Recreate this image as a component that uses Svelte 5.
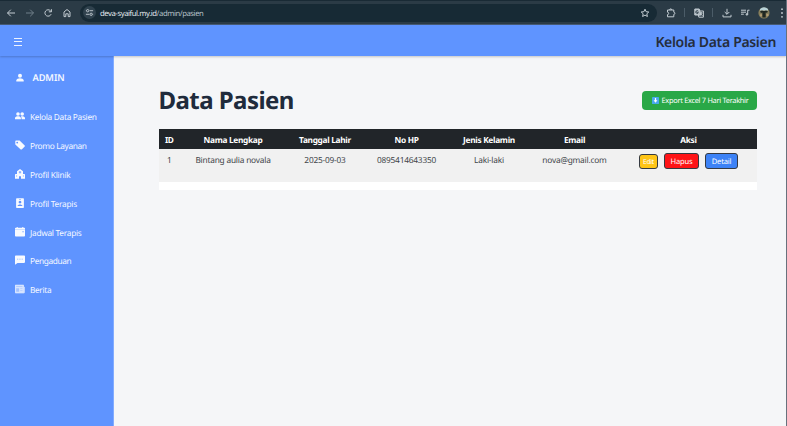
<script>
  const menu = [
    { label: 'Kelola Data Pasien', icon: 'people', ls: -0.3 },
    { label: 'Promo Layanan', icon: 'tag', ls: -0.34 },
    { label: 'Profil Klinik', icon: 'hospital', ls: -0.25 },
    { label: 'Profil Terapis', icon: 'badge', ls: -0.25 },
    { label: 'Jadwal Terapis', icon: 'calendar', ls: -0.27 },
    { label: 'Pengaduan', icon: 'chat', ls: -0.38 },
    { label: 'Berita', icon: 'news', ls: -0.35 }
  ];
  const columns = ['ID', 'Nama Lengkap', 'Tanggal Lahir', 'No HP', 'Jenis Kelamin', 'Email', 'Aksi'];
  const row = ['1', 'Bintang aulia novala', '2025-09-03', '0895414643350', 'Laki-laki', 'nova@gmail.com'];
</script>

<div class="screen">
  <div class="browser">
    <nav class="navs">
      <svg viewBox="0 0 10 10"><path d="M9 5H1.5M4.8 1.7 1.5 5l3.3 3.3" /></svg>
      <svg viewBox="0 0 10 10" class="dim"><path d="M1 5h7.5M5.2 1.7 8.5 5 5.2 8.3" /></svg>
      <svg viewBox="0 0 10 10"><path d="M8.1 6.2A3.2 3.2 0 1 1 7.4 2.7L8.3 3.6M8.4 1.2v2.6H5.8" /></svg>
      <svg viewBox="0 0 10 10"><path d="M2 8.6V4L5 1.5 8 4v4.6H6.2V5.8H3.8v2.8z" /></svg>
    </nav>
    <div class="address">
      <span class="site"><svg viewBox="0 0 10 10"><path d="M1 3h.6M5.2 3H9M1 7h3.8M8.4 7H9" /><circle cx="3" cy="3" r="1.3" /><circle cx="6.8" cy="7" r="1.3" /></svg></span>
      <span class="url">deva-syaiful.my.id<i>/admin/pasien</i></span>
      <svg class="star" viewBox="0 0 10 10"><path d="m5 1.2 1.1 2.5 2.7.3-2 1.8.6 2.7L5 7.1 2.6 8.5l.6-2.7-2-1.8 2.7-.3z" /></svg>
    </div>
    <div class="tools">
      <svg viewBox="0 0 10 10"><path d="M1.5 2h6.3v2.2a1.1 1.1 0 0 1 0 2.2v2.4H1.5V6.6a1.2 1.2 0 0 0 0-2.4zM3.6 2a1.1 1.1 0 0 1 2.2 0" /></svg>
      <b></b>
      <svg viewBox="0 0 10 10"><path class="fill" d="M.8 1h4.4l1.7 6H.8z" /><path d="M5.6 3h3.8v6.2H4.8L4.4 7M6 5h2.6M7.3 4.2V5c-.1 1.2-.8 2-1.5 2.5M6.4 5.5l2 2.3" /><path class="ink" d="M4.2 3.3a1.3 1.3 0 1 0 .1 1.3H3.2" /></svg>
      <b></b>
      <svg viewBox="0 0 10 10"><path d="M5 .8v5.3M2.7 4 5 6.3 7.3 4M1 6.8v2.1h8V6.8" /></svg>
      <svg viewBox="0 0 10 10" class="music"><path d="M1 2.2h5M1 4.2h5M1 6.2h2.8M7.7 6.3V2.2h1.8" /><circle class="fill" cx="6.9" cy="6.4" r=".8" /></svg>
      <svg class="avatar" viewBox="0 0 12 12"><circle cx="6" cy="6" r="5.6" fill="#877f5c" /><path d="M2 2a5.6 5.6 0 0 1 8 0v1.5H2z" fill="#b8d2d7" /><path d="M2 4.6 4 3.6 5 4h2l1-.4 2 1L9 5.8 7.7 5.4v5.2H4.4V5.5L3 6z" fill="#202721" /><path d="M2 7.3h2v2H2zM8.400 7h2v2h-2z" fill="#b69c72" /></svg>
      <svg class="dots" viewBox="0 0 4 12"><circle cx="2" cy="2.2" r=".9" /><circle cx="2" cy="6" r=".9" /><circle cx="2" cy="9.8" r=".9" /></svg>
    </div>
  </div>

  <header>
    <svg class="burger" viewBox="0 0 8 8"><path d="M0 .5h8M0 3.5h8M0 7.5h8" /></svg>
    <span class="title">Kelola Data Pasien</span>
  </header>

  <div class="body">
    <aside>
      <div class="admin">
        <svg viewBox="0 0 10 10"><circle cx="5" cy="2.8" r="2" /><path d="M1.3 8.5V7.5C1.3 6 3.5 5.3 5 5.3s3.7.7 3.7 2.2v1z" /></svg>
        <span>ADMIN</span>
      </div>
      {#each menu as item}
        <div class="item">
          <svg viewBox="0 0 10 10">
            {#if item.icon === 'people'}
              <circle cx="3" cy="3" r="1.8" /><circle cx="7.2" cy="3" r="1.8" /><path d="M0 8.3V7.1c0-1.3 1.6-1.8 3-1.8s2.9.5 2.9 1.8v1.2zM6.6 8.3V7c0-.7-.3-1.2-.8-1.6C7.5 5 10 5.6 10 7.1v1.2z" />
            {:else if item.icon === 'tag'}
              <path fill-rule="evenodd" d="M.3 1.3Q.3.6 1 .6h3.6L9.7 5.4q.4.5 0 1L6.7 9.4q-.5.4-1 0L.3 4.5zM2.2 1.7a.8.8 0 1 0 .01 0z" />
            {:else if item.icon === 'hospital'}
              <path fill-rule="evenodd" d="M0 9.7V5.6Q0 5 .6 5H2V2.2L5 0l3 2.2V5h1.4q.6 0 .6.6v4.1H6V7.3H4v2.4zM4.6 2v.8h-.8v.8h.8v.8h.8v-.8h.8v-.8h-.8V2zM1.3 6.4v1h.8v-1zM7.900 6.400v1h.8v-1z" />
            {:else if item.icon === 'badge'}
              <path fill-rule="evenodd" d="M1.8.2h6.4q.7 0 .7.7v8.3q0 .7-.7.7H1.8q-.7 0-.7-.7V.9q0-.7.7-.7zM4 .9v.6h2V.9zM5 2.7a1.4 1.4 0 1 0 .01 0zM2.6 7.9h4.8C7.4 5.9 2.6 5.9 2.6 7.9z" />
            {:else if item.icon === 'calendar'}
              <path fill-rule="evenodd" d="M0 1.4Q0 .7.7.7h1V.1h1v.6h4.6V.1h1v.6h1q.7 0 .7.7v.8H0zM0 2.5h10v6.3q0 .8-.8.8H.8Q0 9.6 0 8.8zM7.5 4.3v1h1.1v-1z" />
            {:else if item.icon === 'chat'}
              <path fill-rule="evenodd" d="M0 1.2Q0 .4.8.4h8.4q.8 0 .8.8v5.9q0 .8-.8.8H2.5L0 9.8zM2.3 3.7v.9h.9v-.9zM4.5 3.7v.9h.9v-.9zM6.7 3.7v.9h.9v-.9z" />
            {:else}
              <path opacity=".6" fill-rule="evenodd" d="M0 1.5Q0 .8.7.8h7.5q.7 0 .7.7v1.2h.5q.6 0 .6.6v5q0 1-1 1H1Q0 9.3 0 8.3zM1.2 2.3v.7h6.3v-.7zM1.2 4.2v3.5h2.9V4.2zM5.2 4.2v.6h2.3v-.6zM5.2 6v.6h2.3V6z" />
              <path opacity=".45" d="M0 .8h8.9v8.5H0z" />
            {/if}
          </svg>
          <span style="letter-spacing:{item.ls}px">{item.label}</span>
        </div>
      {/each}
    </aside>

    <main>
      <div class="heading">
        <h1>Data Pasien</h1>
        <button class="export">
          <svg viewBox="0 0 8 8"><rect width="8" height="8" rx="1" fill="#48a9ed" /><path d="M3.3 1.2h1.4v2.6h1.5L4 6.6 1.8 3.8h1.5z" fill="#fff" /></svg>
          <span>Export Excel 7 Hari Terakhir</span>
        </button>
      </div>
      <div class="card">
        <table>
          <colgroup><col class="c1" /><col class="c2" /><col class="c3" /><col class="c4" /><col class="c5" /><col class="c6" /><col class="c7" /></colgroup>
          <thead><tr>{#each columns as c}<th>{c}</th>{/each}</tr></thead>
          <tbody>
            <tr>
              {#each row as cell}<td>{cell}</td>{/each}
              <td class="last"><div class="actions"><button class="edit">Edit</button><button class="delete">Hapus</button><button class="detail">Detail</button></div></td>
            </tr>
          </tbody>
        </table>
      </div>
    </main>
  </div>
</div>

<style>
  :global(body) { margin: 0; overflow: hidden; }
  * { box-sizing: border-box; }
  .screen { width: 787px; height: 426px; display: flex; flex-direction: column; background: #f5f6f8; font-family: "Noto Sans", "Open Sans", sans-serif; text-rendering: geometricPrecision; overflow: hidden; border-right: 1px solid #68717d; }
  svg { display: block; flex: none; }
  button { font-family: inherit; text-rendering: inherit; margin: 0; padding: 2px 0 0; display: flex; align-items: center; justify-content: center; white-space: nowrap; }
  .browser { flex: none; width: 787px; height: 25px; background: #2b3b46; border-top: 1px solid #192a35; border-bottom: 1px solid #465b75; display: flex; align-items: center; padding-left: 6px; }
  .browser svg { width: 10px; height: 10px; fill: none; stroke: #c3ccd2; stroke-width: 1; }
  .navs { display: flex; gap: 8.7px; width: 74px; }
  .navs .dim { stroke: #71808a; }
  .address { width: 577px; height: 18px; border-radius: 9px; background: #172a35; display: flex; align-items: center; padding: 0 7px 0 3px; }
  .site { width: 13px; height: 13px; border-radius: 50%; background: #30424e; display: grid; place-items: center; }
  .site svg { width: 9px; height: 9px; }
  .url { font-size: 7.7px; color: #e2e8ec; margin-left: 4px; flex: 1; letter-spacing: -0.44px; padding-top: 2px; }
  .url i { font-style: normal; color: #b5c0c7; }
  .tools { display: flex; align-items: center; margin-left: 9px; }
  .tools b { width: 1px; height: 9px; background: #4b5c68; margin: 0 9px 0 8px; }
  .tools .fill { fill: #aeb9c0; }
  .tools .ink { stroke: #2b3b46; }
  .tools .music { margin-left: 8px; }
  .tools .avatar { width: 12px; height: 12px; stroke: none; margin-left: 8px; }
  .tools .dots { width: 4px; height: 12px; stroke: none; fill: #c3ccd2; margin-left: 10px; }
  header { flex: none; height: 31px; background: #5f94ff; display: flex; align-items: center; justify-content: space-between; padding: 2px 10px 0 14px; box-shadow: 0 1px 2px #0003; position: relative; }
  .burger { width: 8px; height: 8px; stroke: #edf3ff; stroke-width: 1; }
  .title { font-size: 14px; font-weight: 600; color: #252d3c; line-height: 20px; letter-spacing: -0.32px; white-space: nowrap; padding-top: 2px; }
  .body { flex: 1; display: flex; }
  aside { flex: none; width: 114px; background: #5f94ff; color: #f5f8ff; border-right: 1px solid #83acff; padding: 11px 0 0 15px; }
  aside svg { width: 10px; height: 10px; fill: #f8faff; }
  .admin { display: flex; align-items: center; height: 21px; gap: 7.5px; font-size: 9.3px; font-weight: 600; margin-bottom: 14px; letter-spacing: -0.1px; }
  .item { height: 28.9px; display: flex; align-items: center; gap: 5px; font-size: 8.3px; white-space: nowrap; }
  .item svg { margin-top: -1px; }
  .item span { padding-top: 2px; }
  main { flex: 1; padding: 28px 29px 0 44.5px; }
  .heading { display: flex; justify-content: space-between; align-items: center; height: 32px; }
  h1 { margin: 0; padding-top: 1px; font-size: 24px; line-height: 32px; font-weight: 700; color: #202b3c; letter-spacing: -0.55px; }
  .export { width: 115px; height: 19px; border: 0; border-radius: 4px; background: #29a847; color: #fff; font-size: 7.4px; gap: 3px; letter-spacing: -0.29px; padding-left: 1px; }
  .export svg { width: 7px; height: 7px; margin-top: -1px; }
  .card { margin-top: 13px; height: 61px; background: #fff; }
  table { width: 100%; table-layout: fixed; border-collapse: collapse; font-size: 8.3px; color: #414549; letter-spacing: -0.2px; }
  .c1 { width: 21.5px; } .c2 { width: 106px; } .c3 { width: 78px; } .c4 { width: 85px; } .c5 { width: 80px; } .c6 { width: 91px; }
  th { background: #212529; color: #fff; height: 20px; padding: 3px 0 0; font-weight: 700; letter-spacing: -0.3px; line-height: 12px; white-space: nowrap; }
  td { background: #f1f1f1; height: 33px; vertical-align: top; padding: 5px 0 0; line-height: 14px; text-align: center; white-space: nowrap; }
  td.last { padding-top: 4px; }
  .actions { display: flex; align-items: center; justify-content: center; gap: 6px; }
  .actions button { height: 16px; border: 1px solid #353a42; border-radius: 3px; color: #fff; font-size: 7.6px; letter-spacing: -0.2px; }
  .actions .edit { width: 19px; height: 15px; padding-top: 1px; background: #ffc516; font-size: 6.7px; letter-spacing: -0.2px; }
  .actions .delete { width: 35px; background: #ff1417; }
  .actions .detail { width: 33px; background: #3c82f6; }
</style>
